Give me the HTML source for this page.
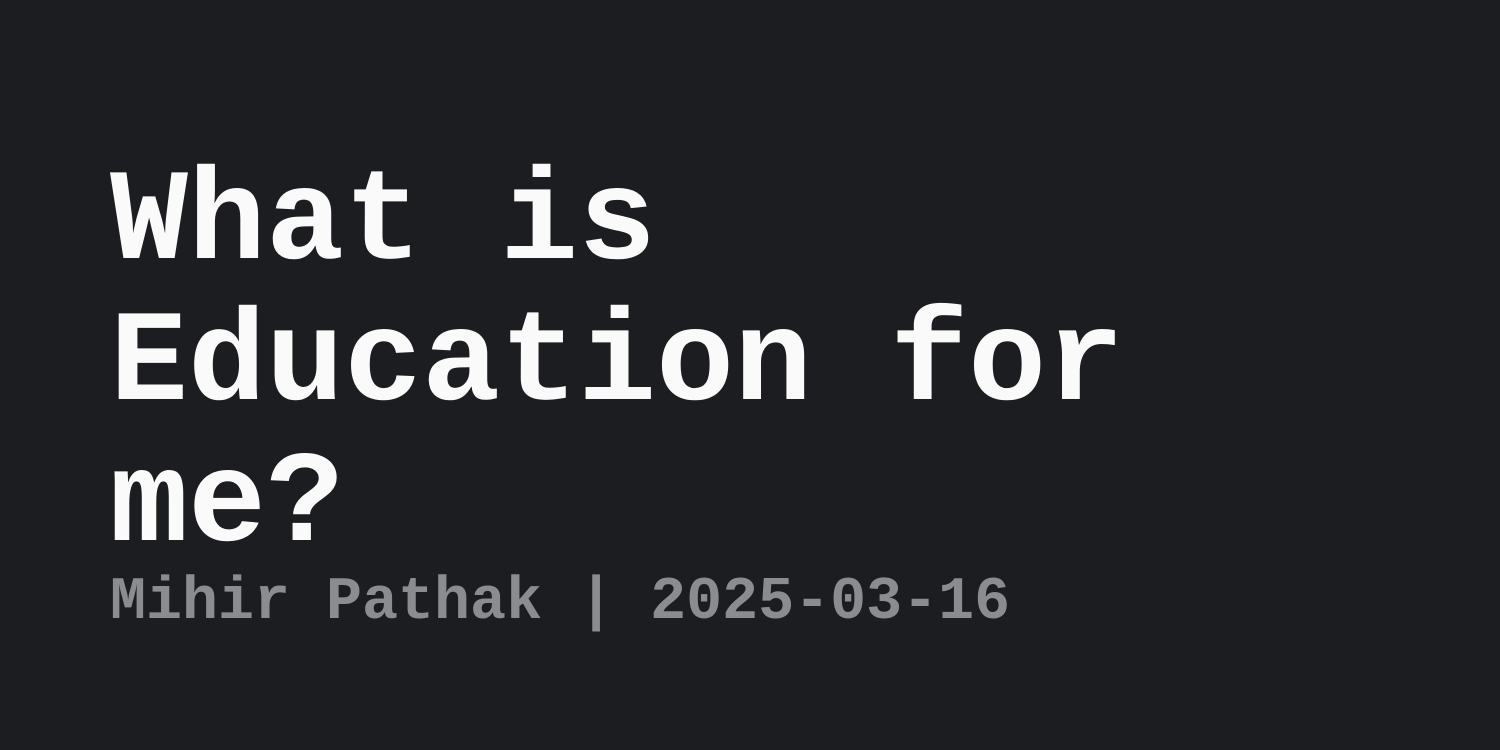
<!DOCTYPE html>
<html><head><style>
html,body{margin:0;padding:0;}
body{width:1500px;height:750px;background:#1c1d21;position:relative;overflow:hidden;font-family:"Liberation Mono",monospace;font-weight:bold;}
#t{position:absolute;left:110px;top:154px;font-size:130px;line-height:141px;color:#fafafa;white-space:pre;}
#s{position:absolute;left:110px;top:568px;font-size:60px;line-height:70px;color:#8b8c90;white-space:pre;}
</style></head><body>
<div id="t">What is
Education for
me?</div>
<div id="s">Mihir Pathak | 2025-03-16</div>
</body></html>
